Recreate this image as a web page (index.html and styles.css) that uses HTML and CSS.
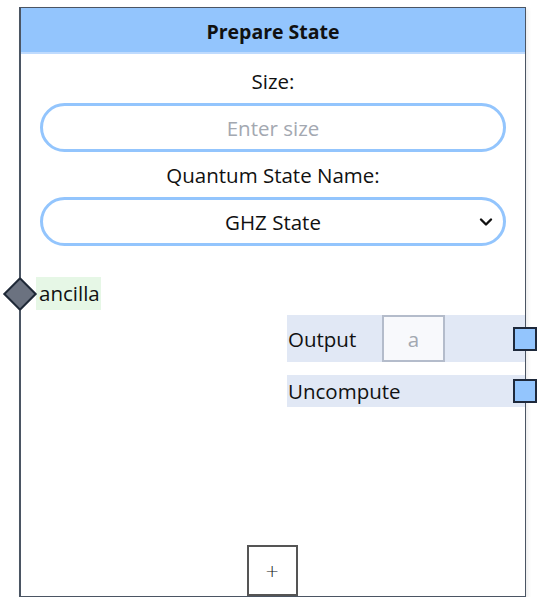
FILE: index.html
```html
<!DOCTYPE html>
<html>
<head>
<meta charset="utf-8">
<link rel="stylesheet" href="styles.css">
</head>
<body>
<div class="node">
  <div class="node-header">Prepare State</div>
  <div class="node-body">
    <div class="field">
      <label class="field-label">Size:</label>
      <input class="pill-input" type="text" placeholder="Enter size">
    </div>
    <div class="field">
      <label class="field-label">Quantum State Name:</label>
      <div class="pill-select">
        <span class="select-value">GHZ State</span>
        <svg class="chevron" width="14" height="10" viewBox="0 0 14 10"><path d="M2 2.5 L7 7.5 L12 2.5" fill="none" stroke="#111" stroke-width="2.4" stroke-linecap="round" stroke-linejoin="round"/></svg>
      </div>
    </div>
    <div class="inputs">
      <div class="in-row">
        <span class="diamond"></span>
        <span class="in-label">ancilla</span>
      </div>
    </div>
    <div class="outputs">
      <div class="out-row out-row-tall">
        <span class="out-label">Output</span>
        <span class="out-box">a</span>
        <span class="port"></span>
      </div>
      <div class="out-row">
        <span class="out-label">Uncompute</span>
        <span class="port"></span>
      </div>
    </div>
    <div class="spacer"></div>
    <div class="add-wrap"><button class="add-btn">+</button></div>
  </div>
</div>
</body>
</html>
```

FILE: styles.css
```css
html, body {
  margin: 0;
  padding: 0;
  background: #ffffff;
}
body {
  padding: 7px 0 0 19px;
  font-family: "Open Sans", "Noto Sans", sans-serif;
  color: #111;
}
.node {
  width: 504px;
  height: 588px;
  border: 1px solid #4b5563;
  border-left-width: 2px;
  box-shadow: 2px 2px 4px rgba(0,0,0,0.08);
  display: flex;
  flex-direction: column;
  position: relative;
  background: #fff;
}
.node-header {
  box-sizing: border-box;
  height: 46px;
  background: #93c5fd;
  border-bottom: 2px solid #bfdbfe;
  display: flex;
  align-items: center;
  justify-content: center;
  font-weight: 700;
  font-size: 19.5px;
  padding-top: 2px;
}
.node-body {
  flex: 1;
  display: flex;
  flex-direction: column;
}
.field {
  display: flex;
  flex-direction: column;
  align-items: center;
  padding: 0 19px;
}
.field-label {
  font-size: 20.5px;
  line-height: 26px;
  margin-top: 14px;
  margin-bottom: 9px;
}
.field + .field .field-label {
  margin-top: 10px;
}
.pill-input, .pill-select {
  box-sizing: border-box;
  width: 466px;
  height: 49px;
  border: 3px solid #93c5fd;
  border-radius: 25px;
  background: #fff;
  font-family: inherit;
  font-size: 20.5px;
  text-align: center;
  outline: none;
}
.pill-input::placeholder {
  color: #a3a8b1;
}
.pill-select {
  display: flex;
  align-items: center;
  justify-content: center;
  position: relative;
}
.select-value {
  color: #111;
}
.chevron {
  position: absolute;
  right: 10px;
  top: 17px;
}
.inputs {
  margin-top: 31px;
}
.in-row {
  position: relative;
  height: 33px;
  display: flex;
  align-items: center;
}
.diamond {
  position: absolute;
  left: -13px;
  top: 5px;
  width: 20px;
  height: 20px;
  background: #6b7280;
  border: 2px solid #1f2937;
  transform: rotate(45deg);
}
.in-label {
  margin-left: 15px;
  height: 33px;
  line-height: 33px;
  padding: 0 1px 0 3px;
  background: #e6f7e6;
  font-size: 20.5px;
}
.outputs {
  margin-top: 5px;
  display: flex;
  flex-direction: column;
  align-items: flex-end;
  gap: 13px;
}
.out-row {
  position: relative;
  width: 238px;
  height: 32px;
  background: #e1e8f5;
  display: flex;
  align-items: center;
  font-size: 20.5px;
}
.out-row-tall {
  height: 47px;
}
.out-label {
  padding-left: 1px;
  width: 94px;
}
.out-box {
  box-sizing: border-box;
  width: 63px;
  height: 47px;
  border: 2px solid #b4bccb;
  background: #f8f9fc;
  color: #a3a8b1;
  display: flex;
  align-items: center;
  justify-content: center;
}
.port {
  position: absolute;
  right: -12px;
  top: 50%;
  margin-top: -12px;
  box-sizing: border-box;
  width: 24px;
  height: 24px;
  background: #93c5fd;
  border: 2px solid #1e293b;
}
.spacer {
  flex: 1;
}
.add-wrap {
  display: flex;
  justify-content: center;
}
.add-btn {
  box-sizing: border-box;
  width: 51px;
  height: 51px;
  margin-right: 2px;
  border: 2px solid #555;
  background: #fff;
  font-family: "DejaVu Sans", sans-serif;
  font-weight: 300;
  font-size: 17px;
  color: #111;
  padding: 0;
}
```
